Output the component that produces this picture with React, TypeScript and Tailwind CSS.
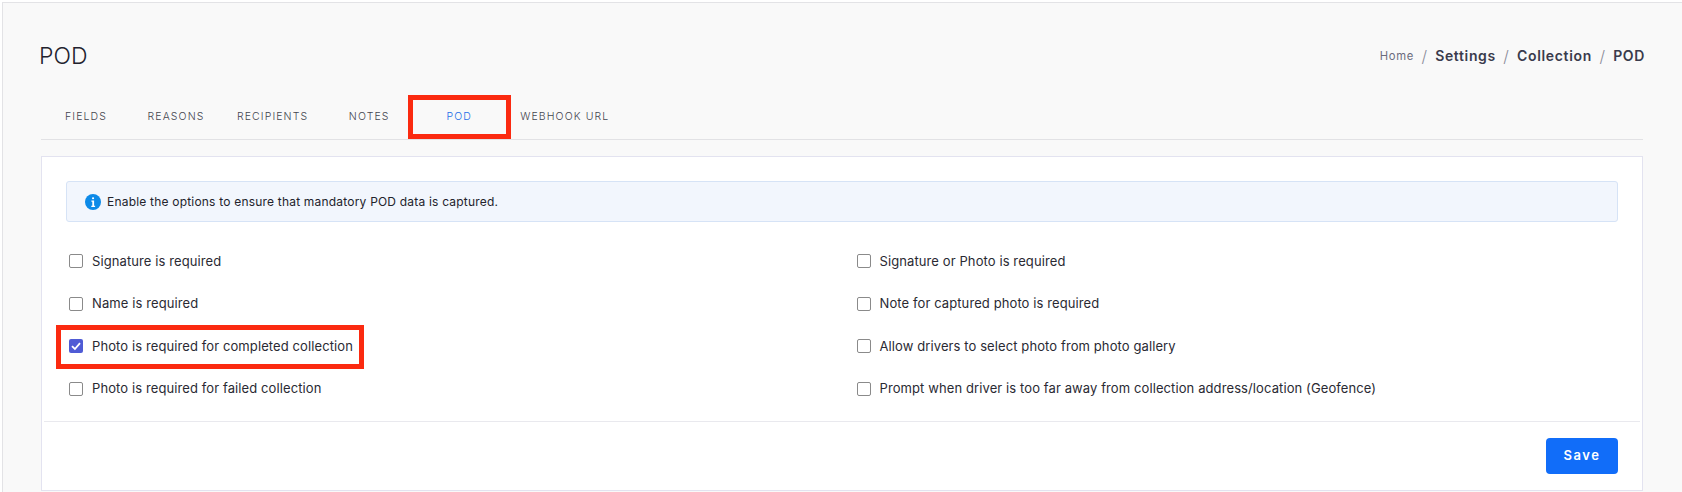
const tabs = ["FIELDS", "REASONS", "RECIPIENTS", "NOTES", "POD", "WEBHOOK URL"];

const leftOptions = [
  { label: "Signature is required" },
  { label: "Name is required" },
  { label: "Photo is required for completed collection", checked: true, marked: true },
  { label: "Photo is required for failed collection" },
];

const rightOptions = [
  { label: "Signature or Photo is required" },
  { label: "Note for captured photo is required" },
  { label: "Allow drivers to select photo from photo gallery" },
  { label: "Prompt when driver is too far away from collection address/location (Geofence)" },
];

type Option = { label: string; checked?: boolean; marked?: boolean };

function OptionRow({ label, checked, marked }: Option) {
  return (
    <div className="relative flex h-[42.5px] items-center gap-[9px]">
      {marked && (
        <span className="absolute top-0 left-[-13px] h-[44px] w-[308px] border-[5px] border-[#fb2a10]" />
      )}
      {checked ? (
        <span className="flex h-[14px] w-[14px] items-center justify-center rounded-[2px] bg-[#4f5bd5]">
          <svg viewBox="0 0 12 12" className="h-[12px] w-[12px]" fill="none">
            <path d="M2 6.2 4.9 9 10 3.2" stroke="#fff" strokeWidth="1.8" />
          </svg>
        </span>
      ) : (
        <span className="h-[14px] w-[14px] rounded-[2px] border-[1.5px] border-[#8a8a8a] bg-white" />
      )}
      <span className="text-[13px] leading-none tracking-[0.1px] text-[#2a2a33]">{label}</span>
    </div>
  );
}

function Slash() {
  return <span className="mx-[7.5px] text-[16px] font-light text-[#8b8c99]">/</span>;
}

export default function App() {
  return (
    <div className="h-[492px] overflow-hidden bg-white pt-[2px] pl-[2px] font-['Inter',sans-serif]">
      <div className="h-full border-t border-l border-[#e3e3e6] bg-[#f9f9f9] pr-[39px] pl-[38px]">
        <div className="flex h-[92px] items-start justify-between pt-[36px]">
          <h1 className="-ml-[2px] text-[23px] leading-[34px] font-light text-[#22222e]">POD</h1>
          <nav className="-mr-[2px] flex items-center pt-[7px] text-[14px] leading-[20px] font-semibold tracking-[0.65px] text-[#3a3b4c]">
            <span className="text-[11.25px] font-normal text-[#6b6c7e]">Home</span>
            <Slash />
            <span>Settings</span>
            <Slash />
            <span>Collection</span>
            <Slash />
            <span>POD</span>
          </nav>
        </div>

        <div className="flex h-[45px] border-b border-[#e2e2e5]">
          {tabs.map((tab) => (
            <div
              key={tab}
              className={`relative flex min-w-[90px] items-center justify-center px-4 text-[10.5px] font-light tracking-[1.1px] ${
                tab === "POD" ? "text-[#1f6fe8]" : "text-[#44454f]"
              }`}
            >
              {tab === "POD" && (
                <span className="absolute top-0 left-[-6px] h-[44px] w-[103px] border-[5px] border-[#fb2a10]" />
              )}
              {tab}
            </div>
          ))}
        </div>

        <div className="mt-[16px] h-[335px] border border-[#e3e3f0] bg-white">
          <div className="px-[24px] pt-[24px]">
            <div className="flex h-[41px] items-center gap-[6px] rounded-[3px] border border-[#d6e3f6] bg-[#f2f6fd] px-[18px] text-[12px] tracking-[0.2px] text-[#23232c]">
              <svg viewBox="0 0 16 16" className="h-[16px] w-[16px]">
                <circle cx="8" cy="8" r="8" fill="#0d8ae8" />
                <rect x="7" y="3.2" width="2.1" height="2.1" rx="1" fill="#fff" />
                <path d="M6.4 6.6h2.7v5.2h1v1.1H6.3v-1.1h1V7.7h-.9z" fill="#fff" />
              </svg>
              <span>Enable the options to ensure that mandatory POD data is captured.</span>
            </div>
            <div className="mt-[18px] grid h-[170px] grid-cols-2 pl-[3px]">
              <div>
                {leftOptions.map((option) => (
                  <OptionRow key={option.label} {...option} />
                ))}
              </div>
              <div className="pl-[13px]">
                {rightOptions.map((option) => (
                  <OptionRow key={option.label} {...option} />
                ))}
              </div>
            </div>
          </div>
          <div className="mx-[2px] mt-[11px] flex justify-end border-t border-[#e9e9ee] pt-[16px] pr-[22px]">
            <button className="h-[36px] w-[72px] rounded-[4px] bg-[#116df9] text-[13px] font-semibold tracking-[1.5px] text-white">
              Save
            </button>
          </div>
        </div>
      </div>
    </div>
  );
}
